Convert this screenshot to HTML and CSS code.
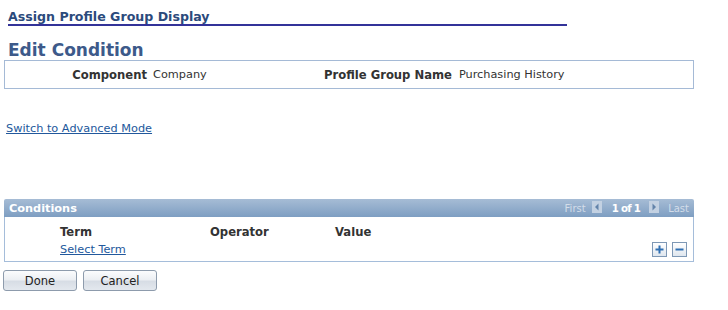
FILE: index.html
```html
<!DOCTYPE html>
<html>
<head>
<meta charset="utf-8">
<link rel="stylesheet" href="styles.css">
</head>
<body>
<div class="page">
  <div class="page-title">Assign Profile Group Display</div>
  <h1 class="heading">Edit Condition</h1>
  <div class="info-box">
    <span class="label lbl-1">Component</span>
    <span class="value val-1">Company</span>
    <span class="label lbl-2">Profile Group Name</span>
    <span class="value val-2">Purchasing History</span>
  </div>
  <a class="link adv-link" href="#">Switch to Advanced Mode</a>

  <div class="grid">
    <div class="grid-head">
      <span class="grid-title">Conditions</span>
      <div class="pager">
        <span class="pager-dim">First</span>
        <svg class="pager-arrow arrow-prev" width="10" height="12" viewBox="0 0 10 12"><rect x="0" y="0" width="10" height="12" fill="#c3d1e2"/><path d="M6.5 2.5 L3 6 L6.5 9.5 Z" fill="#6383aa"/></svg>
        <span class="pager-count">1 of 1</span>
        <svg class="pager-arrow arrow-next" width="10" height="12" viewBox="0 0 10 12"><rect x="0" y="0" width="10" height="12" fill="#c3d1e2"/><path d="M3.5 2.5 L7 6 L3.5 9.5 Z" fill="#6383aa"/></svg>
        <span class="pager-dim pager-last">Last</span>
      </div>
    </div>
    <div class="grid-body">
      <div class="grid-cols">
        <span class="col col-term">Term</span>
        <span class="col col-op">Operator</span>
        <span class="col col-val">Value</span>
      </div>
      <div class="grid-row">
        <a class="link" href="#">Select Term</a>
        <div class="row-btns">
          <span class="row-btn"><svg width="13" height="13" viewBox="0 0 13 13"><path d="M6.5 2.5 V10.5 M2.5 6.5 H10.5" stroke="#2f6fb2" stroke-width="2"/></svg></span>
          <span class="row-btn"><svg width="13" height="13" viewBox="0 0 13 13"><path d="M2.5 6.5 H10.5" stroke="#2f6fb2" stroke-width="2"/></svg></span>
        </div>
      </div>
    </div>
  </div>

  <div class="actions">
    <button class="btn">Done</button>
    <button class="btn">Cancel</button>
  </div>
</div>
</body>
</html>
```
FILE: styles.css
```css
html, body {
  margin: 0;
  padding: 0;
  background: #ffffff;
}
body {
  font-family: "DejaVu Sans", Verdana, sans-serif;
  font-size: 11.3px;
  color: #333333;
}
.page {
  width: 728px;
}
.page-title {
  margin: 9px 0 0 8px;
  width: 559px;
  font-size: 12.6px;
  font-weight: bold;
  line-height: 15px;
  color: #2b4a7c;
  border-bottom: 2px solid #333399;
}
.heading {
  margin: 14px 0 0 8px;
  font-size: 17px;
  line-height: 20px;
  font-weight: bold;
  color: #3d5a8a;
}
.info-box {
  margin-left: 4px;
  width: 688px;
  height: 27px;
  border: 1px solid #a5bad6;
  display: grid;
  grid-template-columns: 142px 177px auto 1fr;
  align-items: center;
}
.label {
  font-weight: bold;
  font-size: 11.6px;
  color: #333333;
}
.lbl-1 {
  text-align: right;
}
.val-1 {
  padding-left: 6px;
}
.val-2 {
  padding-left: 7px;
}
.value {
  color: #333333;
}
.link {
  color: #22589c;
  text-decoration: underline;
}
.adv-link {
  display: block;
  margin: 33px 0 0 6px;
  line-height: 13px;
  width: max-content;
}
.grid {
  margin: 64px 0 0 4px;
  width: 690px;
}
.grid-head {
  height: 18px;
  background: linear-gradient(#a6bcd5, #7e9ec2);
  border-radius: 2px 2px 0 0;
  display: flex;
  align-items: center;
  justify-content: space-between;
  padding: 1px 5px 0 5px;
  box-sizing: border-box;
}
.grid-title {
  color: #ffffff;
  font-weight: bold;
  font-size: 11.3px;
}
.pager {
  display: flex;
  align-items: center;
  font-size: 10px;
}
.pager-dim {
  color: #d3dde9;
}
.pager-arrow {
  display: block;
  margin-top: -3px;
}
.arrow-prev {
  margin-left: 6px;
  margin-right: 10px;
}
.arrow-next {
  margin-left: 9px;
  margin-right: 9px;
}
.pager-count {
  color: #ffffff;
  font-weight: bold;
  font-size: 10.2px;
  letter-spacing: -0.7px;
}
.grid-body {
  border: 1px solid #a5bdda;
  border-top: none;
  height: 44px;
}
.grid-cols {
  display: flex;
  padding: 8px 0 0 55px;
  line-height: 14px;
  font-weight: bold;
  font-size: 11.6px;
  color: #333333;
}
.col-term {
  width: 150px;
}
.col-op {
  width: 125px;
}
.grid-row {
  display: flex;
  align-items: flex-start;
  justify-content: space-between;
  padding-left: 55px;
  line-height: 14px;
  margin-top: 4px;
}
.row-btns {
  display: flex;
  gap: 5px;
  margin-right: 6px;
  margin-top: -1px;
}
.row-btn {
  display: block;
  width: 13px;
  height: 13px;
  border: 1px solid #7e98b5;
  background: linear-gradient(#ffffff, #dfe6ee);
}
.row-btn svg {
  display: block;
}
.actions {
  display: flex;
  gap: 6px;
  margin: 8px 0 0 3px;
}
.btn {
  width: 74px;
  height: 21px;
  font-family: "DejaVu Sans", Verdana, sans-serif;
  font-size: 11.5px;
  color: #222222;
  border: 1px solid #8d9bac;
  border-radius: 3px;
  background: linear-gradient(#fbfcfd 0%, #eceff3 45%, #d7dde5 55%, #e3e8ee 100%);
  padding: 0;
}
```
